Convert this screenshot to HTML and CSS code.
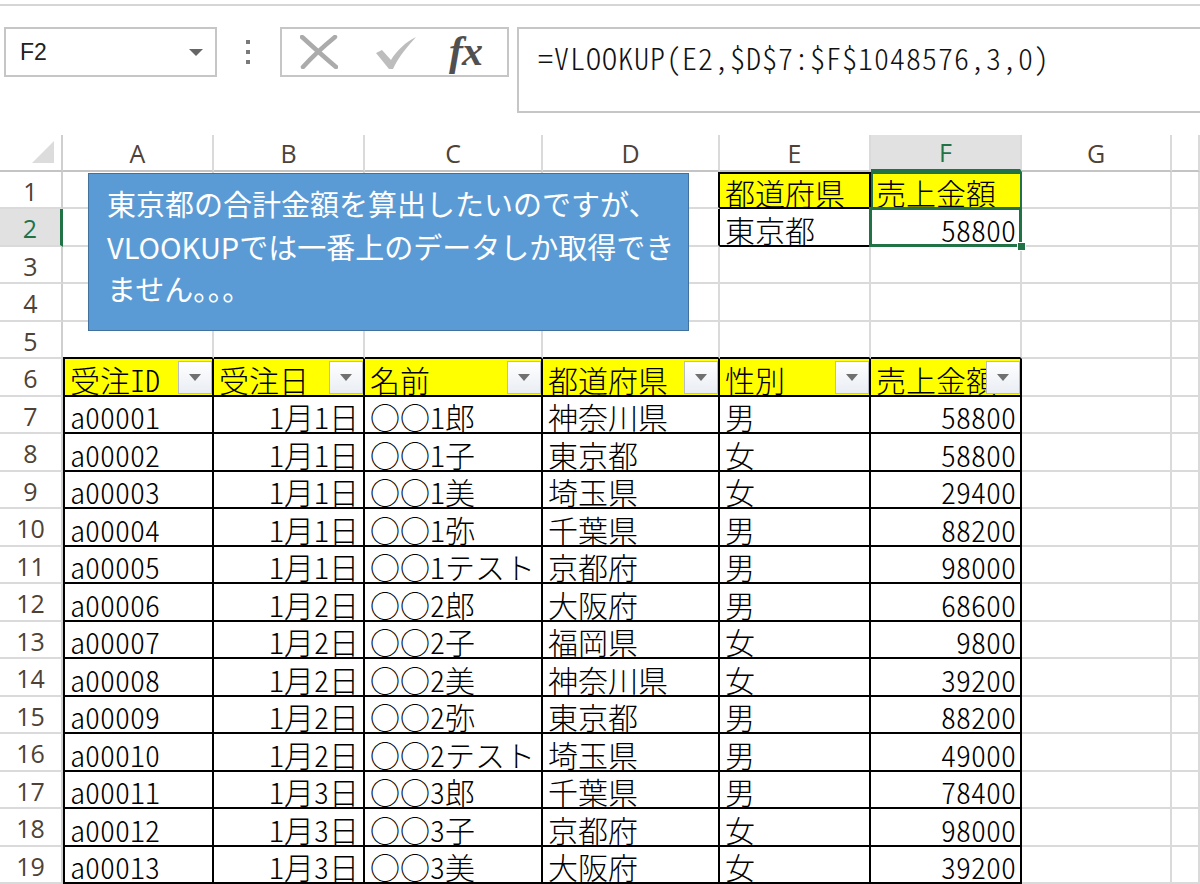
FILE: index.html
```html
<!DOCTYPE html>
<html lang="ja">
<head>
<meta charset="utf-8">
<title>Excel VLOOKUP</title>
<link rel="stylesheet" href="styles.css">
</head>
<body>
<div class="top"></div>
<div class="bar">
  <div class="namebox"><span class="nb-text">F2</span><span class="nb-arrow"></span></div>
  <div class="dots"><i></i><i></i><i></i></div>
  <div class="btns">
    <svg class="ico-x" width="38" height="34" viewBox="0 0 38 34"><path d="M2 2 C12 11 24 22 36 32" stroke="#ababab" stroke-width="4.5" fill="none" stroke-linecap="round"/><path d="M35 2 C24 11 13 21 3 32" stroke="#ababab" stroke-width="4.5" fill="none" stroke-linecap="round"/></svg>
    <svg class="ico-v" width="42" height="34" viewBox="0 0 42 34"><path d="M1 17 L7 14 L16 24 C22 14 31 6 41 1 C33 10 24 20 18 33 L14 33 Z" fill="#bdbdbd"/></svg>
    <span class="fx">fx</span>
  </div>
  <div class="formula">=VLOOKUP(E2,$D$7:$F$1048576,3,0)</div>
</div>

<div class="sheet">
  <div class="c corner"><svg width="22" height="22" viewBox="0 0 22 22"><polygon points="22,0 22,22 0,22" fill="#dcdcdc"/></svg></div>
  <div class="c ch">A</div><div class="c ch">B</div><div class="c ch">C</div><div class="c ch">D</div><div class="c ch">E</div><div class="c ch sel-h">F</div><div class="c ch">G</div><div class="c ch"></div>

  <div class="c rh">1</div><div class="c"></div><div class="c"></div><div class="c"></div><div class="c bkr"></div><div class="c y bk bt">都道府県</div><div class="c y bk f1">売上金額</div><div class="c"></div><div class="c"></div>
  <div class="c rh sel-r">2</div><div class="c"></div><div class="c"></div><div class="c"></div><div class="c bkr"></div><div class="c bk">東京都</div><div class="c bk r f2">58800<span class="selbox"></span><span class="handle"></span></div><div class="c"></div><div class="c"></div>
  <div class="c rh">3</div><div class="c"></div><div class="c"></div><div class="c"></div><div class="c"></div><div class="c"></div><div class="c"></div><div class="c"></div><div class="c"></div>
  <div class="c rh">4</div><div class="c"></div><div class="c"></div><div class="c"></div><div class="c"></div><div class="c"></div><div class="c"></div><div class="c"></div><div class="c"></div>
  <div class="c rh">5</div><div class="c bkb"></div><div class="c bkb"></div><div class="c bkb"></div><div class="c bkb"></div><div class="c bkb"></div><div class="c bkb"></div><div class="c"></div><div class="c"></div>

  <div class="c rh">6</div>
  <div class="c y bk bl hd">受注ID<span class="fb"></span></div>
  <div class="c y bk hd">受注日<span class="fb"></span></div>
  <div class="c y bk hd">名前<span class="fb"></span></div>
  <div class="c y bk hd">都道府県<span class="fb"></span></div>
  <div class="c y bk hd">性別<span class="fb"></span></div>
  <div class="c y bk hd">売上金額<span class="fb"></span></div>
  <div class="c"></div><div class="c"></div>

  <div class="c rh">7</div><div class="c bk bl">a00001</div><div class="c bk r">1月1日</div><div class="c bk">○○1郎</div><div class="c bk">神奈川県</div><div class="c bk">男</div><div class="c bk r">58800</div><div class="c"></div><div class="c"></div>
  <div class="c rh">8</div><div class="c bk bl">a00002</div><div class="c bk r">1月1日</div><div class="c bk">○○1子</div><div class="c bk">東京都</div><div class="c bk">女</div><div class="c bk r">58800</div><div class="c"></div><div class="c"></div>
  <div class="c rh">9</div><div class="c bk bl">a00003</div><div class="c bk r">1月1日</div><div class="c bk">○○1美</div><div class="c bk">埼玉県</div><div class="c bk">女</div><div class="c bk r">29400</div><div class="c"></div><div class="c"></div>
  <div class="c rh">10</div><div class="c bk bl">a00004</div><div class="c bk r">1月1日</div><div class="c bk">○○1弥</div><div class="c bk">千葉県</div><div class="c bk">男</div><div class="c bk r">88200</div><div class="c"></div><div class="c"></div>
  <div class="c rh">11</div><div class="c bk bl">a00005</div><div class="c bk r">1月1日</div><div class="c bk">○○1テスト</div><div class="c bk">京都府</div><div class="c bk">男</div><div class="c bk r">98000</div><div class="c"></div><div class="c"></div>
  <div class="c rh">12</div><div class="c bk bl">a00006</div><div class="c bk r">1月2日</div><div class="c bk">○○2郎</div><div class="c bk">大阪府</div><div class="c bk">男</div><div class="c bk r">68600</div><div class="c"></div><div class="c"></div>
  <div class="c rh">13</div><div class="c bk bl">a00007</div><div class="c bk r">1月2日</div><div class="c bk">○○2子</div><div class="c bk">福岡県</div><div class="c bk">女</div><div class="c bk r">9800</div><div class="c"></div><div class="c"></div>
  <div class="c rh">14</div><div class="c bk bl">a00008</div><div class="c bk r">1月2日</div><div class="c bk">○○2美</div><div class="c bk">神奈川県</div><div class="c bk">女</div><div class="c bk r">39200</div><div class="c"></div><div class="c"></div>
  <div class="c rh">15</div><div class="c bk bl">a00009</div><div class="c bk r">1月2日</div><div class="c bk">○○2弥</div><div class="c bk">東京都</div><div class="c bk">男</div><div class="c bk r">88200</div><div class="c"></div><div class="c"></div>
  <div class="c rh">16</div><div class="c bk bl">a00010</div><div class="c bk r">1月2日</div><div class="c bk">○○2テスト</div><div class="c bk">埼玉県</div><div class="c bk">男</div><div class="c bk r">49000</div><div class="c"></div><div class="c"></div>
  <div class="c rh">17</div><div class="c bk bl">a00011</div><div class="c bk r">1月3日</div><div class="c bk">○○3郎</div><div class="c bk">千葉県</div><div class="c bk">男</div><div class="c bk r">78400</div><div class="c"></div><div class="c"></div>
  <div class="c rh">18</div><div class="c bk bl">a00012</div><div class="c bk r">1月3日</div><div class="c bk">○○3子</div><div class="c bk">京都府</div><div class="c bk">女</div><div class="c bk r">98000</div><div class="c"></div><div class="c"></div>
  <div class="c rh">19</div><div class="c bk bl">a00013</div><div class="c bk r">1月3日</div><div class="c bk">○○3美</div><div class="c bk">大阪府</div><div class="c bk">女</div><div class="c bk r">39200</div><div class="c"></div><div class="c"></div>

  <div class="callout">東京都の合計金額を算出したいのですが、<br>VLOOKUPでは一番上のデータしか取得でき<br>ません。。。</div>
</div>
</body>
</html>
```

FILE: styles.css
```css
* { box-sizing: border-box; }
html, body { margin: 0; padding: 0; background: #fff; overflow: hidden; }
body { width: 1200px; height: 884px; font-family: "Noto Sans CJK JP", sans-serif; color: #000; }

.top { height: 4px; }
.bar {
  height: 131px;
  border-top: 2px solid #d6d6d6;
  display: flex;
  align-items: flex-start;
  padding: 21px 0 0 4px;
}
.namebox {
  width: 213px; height: 50px;
  border: 2px solid #c6c6c6;
  display: flex; align-items: center; justify-content: space-between;
  padding: 0 12px 0 14px;
}
.nb-text { font-family: "Liberation Sans", sans-serif; font-size: 23px; color: #222; }
.nb-arrow { width: 0; height: 0; border-left: 7px solid transparent; border-right: 7px solid transparent; border-top: 7px solid #666; }
.dots { margin-left: 26px; width: 10px; height: 50px; display: flex; flex-direction: column; align-items: center; justify-content: center; gap: 6px; }
.dots i { width: 4px; height: 4px; background: #7a7a7a; display: block; }
.btns {
  margin-left: 27px; width: 229px; height: 50px;
  border: 2px solid #c6c6c6;
  display: flex; align-items: center;
  padding-left: 18px;
}
.ico-v { margin-left: 37px; margin-top: 2px; }
.fx { margin-left: 32px; font-family: "Liberation Serif", serif; font-style: italic; font-weight: bold; font-size: 42px; color: #505050; line-height: 40px; margin-top: -2px; letter-spacing: -1px; }
.formula {
  margin-left: 8px; flex: 1; margin-right: -20px; height: 86px;
  border: 2px solid #c6c6c6;
  padding: 8px 0 0 19px;
  font-family: "Noto Sans CJK JP", sans-serif; font-size: 30px; line-height: 40px; font-weight: 300; color: #111;
  font-feature-settings: "hwid" 1;
  letter-spacing: 1px;
  white-space: nowrap;
}

.sheet {
  position: relative;
  display: grid;
  grid-template-columns: 63px 151px 151px 178px 177px 151px 151px 150px 1fr;
  grid-template-rows: 37px repeat(9, 37px 38px) 37px;
}
.c {
  border-right: 2px solid #dadada;
  border-bottom: 2px solid #dadada;
  display: flex; align-items: center;
  padding: 3px 4px 0 5px;
  font-size: 30px; line-height: 30px; font-weight: 300;
  font-feature-settings: "hwid" 1;
  white-space: nowrap; overflow: hidden;
  position: relative;
}
.corner { border-right-color: #cfcfcf; border-bottom-color: #c4c4c4; justify-content: flex-end; align-items: flex-end; padding: 0 7px 7px 0; }
.ch, .rh {
  justify-content: center; padding: 0;
  font-family: "Open Sans", sans-serif; font-size: 25px; font-weight: 400; color: #4e4236;
  font-feature-settings: normal;
}
.ch { border-bottom-color: #c4c4c4; }
.rh { border-right-color: #cfcfcf; padding-top: 2px; }
.sel-h { background: #e1e1e1; color: #217346; border-bottom: 3px solid #217346; }
.sel-r { background: #e1e1e1; color: #217346; border-right: 3px solid #217346; }
.y { background: #ffff00; }
.bk { border-right-color: #000; border-bottom-color: #000; }
.bkr { border-right-color: #000; }
.bkb { border-bottom-color: #000; }
.bl { border-left: 2px solid #000; }
.bt { border-top: 2px solid #000; }
.r { justify-content: flex-end; }
.f1 { border-top: 2px solid #217346; box-shadow: inset 2px 0 0 #217346; border-right-color: #217346; }
.f2 { overflow: visible; }
.selbox {
  position: absolute; left: -2px; top: -2px; right: -2px; bottom: -2px;
  border: 3px solid #217346; pointer-events: none;
}
.handle {
  position: absolute; right: -6px; bottom: -6px; width: 9px; height: 9px;
  background: #217346; border: 1px solid #fff; z-index: 2;
}
.hd { padding-right: 0; }
.fb {
  position: absolute; right: 0; top: 2px; width: 34px; height: 33px;
  background: linear-gradient(#ffffff, #e9edf3);
  border: 1px solid #b9bcc2;
  display: flex; align-items: center; justify-content: center;
}
.fb::after {
  content: ""; width: 0; height: 0;
  border-left: 6px solid transparent; border-right: 6px solid transparent; border-top: 7px solid #707070;
}

.callout {
  position: absolute; left: 88px; top: 38px; width: 601px; height: 158px;
  background: #5b9bd5; border: 1px solid #41719c;
  color: #fff; font-size: 29px; line-height: 42.5px;
  padding: 8px 0 0 18px;
  white-space: nowrap;
}
```
